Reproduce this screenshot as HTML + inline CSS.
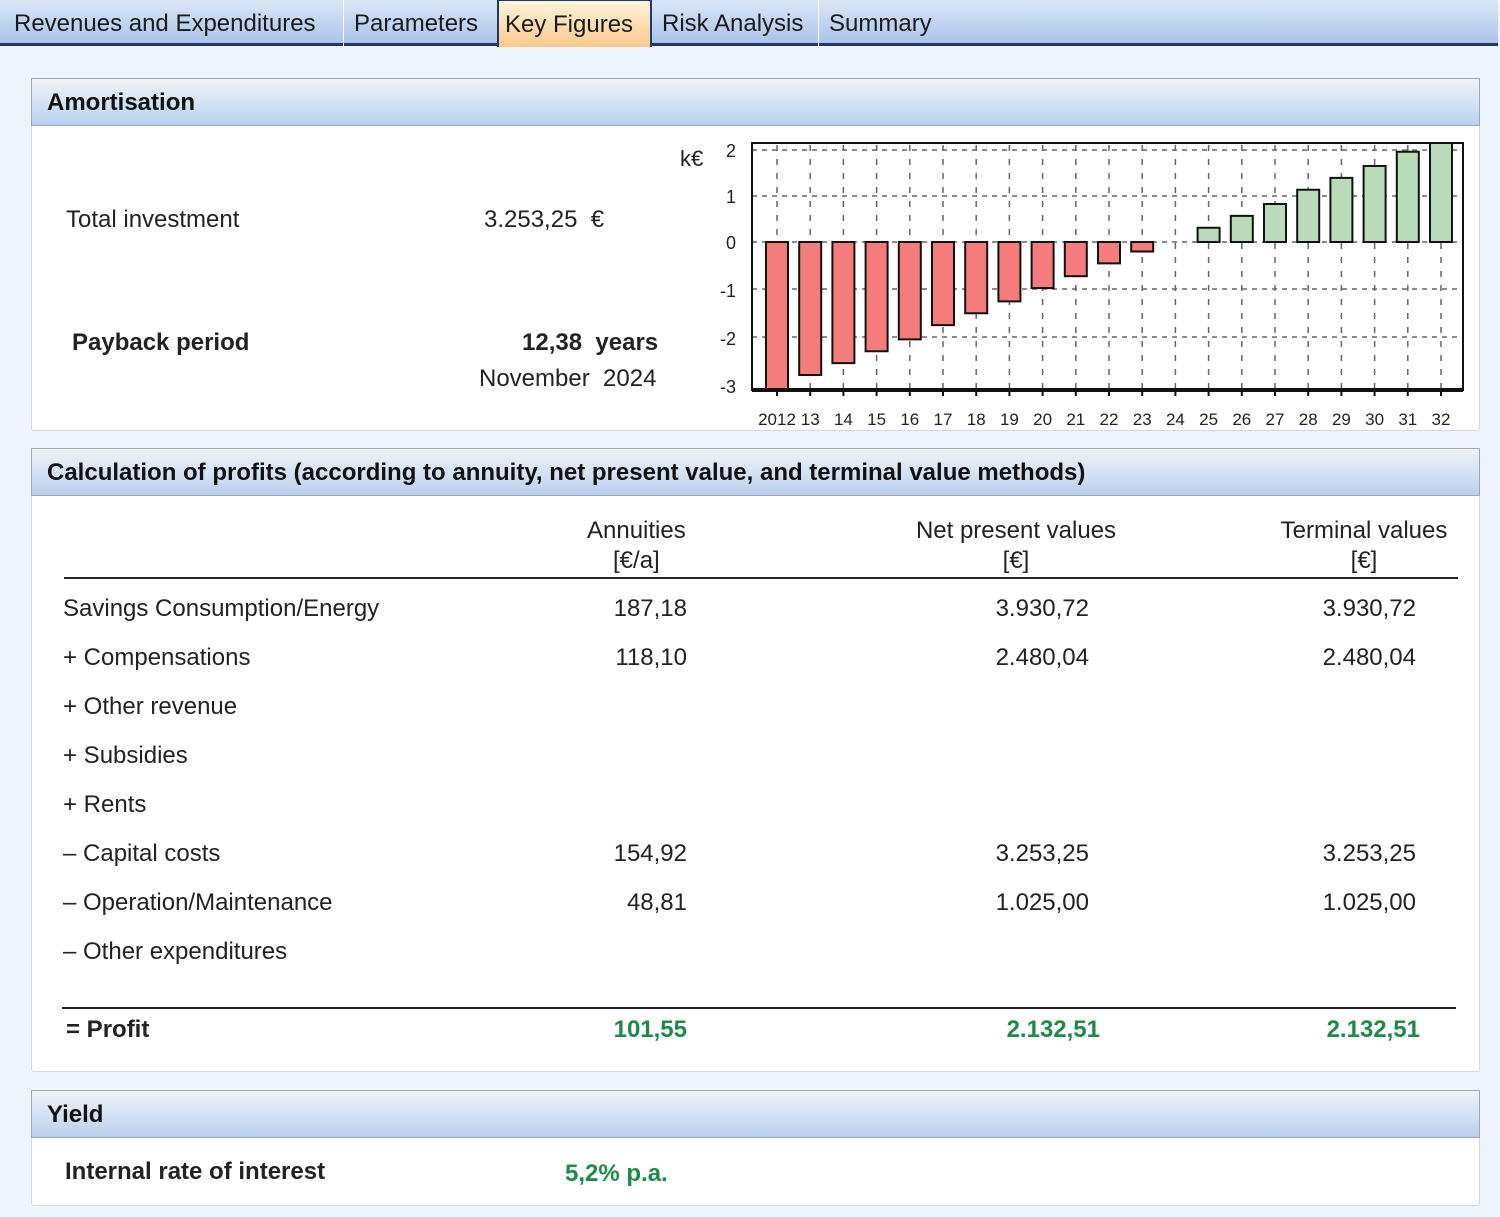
<!DOCTYPE html>
<html><head><meta charset="utf-8"><style>
*{margin:0;padding:0;box-sizing:border-box}
body{width:1500px;height:1217px;background:#eef4fb;font-family:"Liberation Sans",sans-serif;color:#222;position:relative;overflow:hidden;font-size:24px}
.a{position:absolute;white-space:nowrap}
.tabs{position:absolute;left:0;top:0;width:1498px;height:46px;background:linear-gradient(#dbe7f7,#a9c4ea);border-bottom:3px solid #1f3a6a}
.tab{position:absolute;top:0;height:46px;line-height:48px;font-size:24px;color:#1a1a1a;border-right:1px solid #f4f8ff;padding:0 8px;white-space:nowrap;overflow:hidden}
.tab.on{background:linear-gradient(#fff4dc,#f8c98a);border:2px solid #1f3a6a;border-bottom:none;height:48px;top:-1px;padding:0 6px}
.panel{position:absolute;left:31px;width:1449px;background:#fff;border:1px solid #cfd8e4;border-radius:3px}
.hdr{position:absolute;left:31px;width:1449px;height:48px;background:linear-gradient(#f2f2f2,#dbe6f5 40%,#b9d0ee);border:1px solid #9aa8b8;font-weight:bold;font-size:24px;line-height:48px;padding-left:15px;color:#111;white-space:nowrap}
.b{font-weight:bold}
.g{color:#1e8a4a;font-weight:bold}
.r{text-align:right}
</style></head><body>
<div class="tabs">
<div class="tab" style="left:2px;width:342px;padding-left:12px">Revenues and Expenditures</div>
<div class="tab" style="left:344px;width:154px;padding-left:10px">Parameters</div>
<div class="tab on" style="left:497px;width:155px">Key Figures</div>
<div class="tab" style="left:652px;width:167px;padding-left:10px">Risk Analysis</div>
<div class="tab" style="left:819px;width:125px;border-right:none;padding-left:10px">Summary</div>
</div>

<div class="panel" style="top:78px;height:353px"></div>
<div class="hdr" style="top:78px">Amortisation</div>
<div class="a" style="left:66px;top:206px">Total investment</div>
<div class="a" style="left:484px;top:206px">3.253,25 &nbsp;€</div>
<div class="a b" style="left:72px;top:329px">Payback period</div>
<div class="a b" style="left:522px;top:329px">12,38 &nbsp;years</div>
<div class="a" style="left:479px;top:365px">November &nbsp;2024</div>

<svg class="a" style="left:0;top:0" width="1500" height="440" font-family="Liberation Sans,sans-serif" font-size="18" fill="#222">
<text x="680" y="166" font-size="22">k€</text>
<g text-anchor="end"><text x="736" y="157">2</text><text x="736" y="203">1</text><text x="736" y="249">0</text><text x="736" y="297">-1</text><text x="736" y="345">-2</text><text x="736" y="393">-3</text></g>
<g stroke="#666" stroke-width="1.5" stroke-dasharray="5,5">
<line x1="752" y1="150" x2="1463" y2="150"/><line x1="752" y1="196" x2="1463" y2="196"/><line x1="752" y1="242" x2="1463" y2="242"/><line x1="752" y1="289" x2="1463" y2="289"/><line x1="752" y1="337" x2="1463" y2="337"/>
</g>
<g id="v" stroke="#666" stroke-width="1.5" stroke-dasharray="6,8"></g>
<g id="bars" stroke="#111" stroke-width="2"></g>
<rect x="752" y="143" width="711" height="247" fill="none" stroke="#111" stroke-width="2"/>
<line x1="752" y1="390" x2="1463" y2="390" stroke="#111" stroke-width="4"/>
<g id="lbl" text-anchor="middle" font-size="17"></g>
</svg>
<script>
(function(){var vals=[-3.1,-2.8,-2.55,-2.3,-2.05,-1.75,-1.5,-1.25,-0.97,-0.72,-0.45,-0.2,0,0.3,0.55,0.8,1.1,1.35,1.6,1.9,2.15];
var ns="http://www.w3.org/2000/svg",b=document.getElementById('bars'),v=document.getElementById('v'),l=document.getElementById('lbl');
for(var i=0;i<21;i++){var cx=777+i*33.2;
var ln=document.createElementNS(ns,'line');ln.setAttribute('x1',cx);ln.setAttribute('x2',cx);ln.setAttribute('y1',145);ln.setAttribute('y2',388);v.appendChild(ln);
var t=document.createElementNS(ns,'line');t.setAttribute('x1',cx);t.setAttribute('x2',cx);t.setAttribute('y1',388);t.setAttribute('y2',396);t.setAttribute('stroke','#111');b.appendChild(t);
var val=vals[i];if(val!=0){var y0=242,y1=242-val*47.5;if(y1<143)y1=143;if(y1>390)y1=390;
var r=document.createElementNS(ns,'rect');r.setAttribute('x',cx-11);r.setAttribute('width',22);r.setAttribute('y',Math.min(y0,y1));r.setAttribute('height',Math.abs(y1-y0));r.setAttribute('fill',val<0?'#f47c7c':'#b9dbb9');b.appendChild(r);}
var tx=document.createElementNS(ns,'text');tx.setAttribute('x',cx);tx.setAttribute('y',425);tx.textContent=i==0?'2012':String(12+i);l.appendChild(tx);}
})();
</script>

<div class="panel" style="top:448px;height:624px"></div>
<div class="hdr" style="top:448px">Calculation of profits (according to annuity, net present value, and terminal value methods)</div>
<div class="a" style="left:587px;top:516px;text-align:center;line-height:30px">Annuities<br>[€/a]</div>
<div class="a" style="left:910px;top:516px;text-align:center;line-height:30px;width:212px">Net present values<br>[€]</div>
<div class="a" style="left:1278px;top:516px;text-align:center;line-height:30px;width:172px">Terminal values<br>[€]</div>
<div class="a" style="left:64px;top:577px;width:1394px;height:2px;background:#222"></div>
<div class="a" style="left:63px;top:584px;line-height:49px">Savings Consumption/Energy<br>+ Compensations<br>+ Other revenue<br>+ Subsidies<br>+ Rents<br>– Capital costs<br>– Operation/Maintenance<br>– Other expenditures</div>
<div class="a r" style="left:560px;width:127px;top:584px;line-height:49px">187,18<br>118,10<br>&nbsp;<br>&nbsp;<br>&nbsp;<br>154,92<br>48,81</div>
<div class="a r" style="left:950px;width:139px;top:584px;line-height:49px">3.930,72<br>2.480,04<br>&nbsp;<br>&nbsp;<br>&nbsp;<br>3.253,25<br>1.025,00</div>
<div class="a r" style="left:1280px;width:136px;top:584px;line-height:49px">3.930,72<br>2.480,04<br>&nbsp;<br>&nbsp;<br>&nbsp;<br>3.253,25<br>1.025,00</div>
<div class="a" style="left:62px;top:1007px;width:1394px;height:2px;background:#222"></div>
<div class="a b" style="left:66px;top:1016px">= Profit</div>
<div class="a g r" style="left:560px;width:127px;top:1016px">101,55</div>
<div class="a g r" style="left:950px;width:150px;top:1016px">2.132,51</div>
<div class="a g r" style="left:1280px;width:140px;top:1016px">2.132,51</div>

<div class="panel" style="top:1090px;height:116px"></div>
<div class="hdr" style="top:1090px">Yield</div>
<div class="a b" style="left:65px;top:1158px">Internal rate of interest</div>
<div class="a g" style="left:565px;top:1160px">5,2% p.a.</div>
</body></html>
